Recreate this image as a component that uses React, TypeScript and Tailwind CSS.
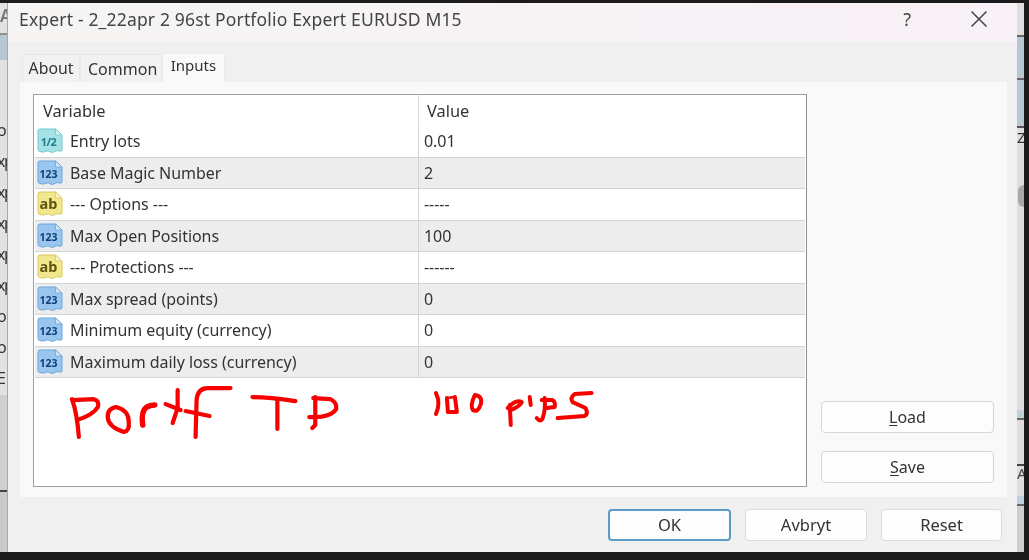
import React from "react";

type Kind = "half" | "int" | "str";

const ICONS: Record<Kind, { fill: string; stroke: string; ear: string; label: string; color: string; size: number; spacing: number }> = {
  half: { fill: "#a5e2e6", stroke: "#6cc8d0", ear: "#d8f3f4", label: "1/2", color: "#23808e", size: 11, spacing: -0.6 },
  int: { fill: "#98c6ee", stroke: "#6aa6dc", ear: "#d3e6f7", label: "123", color: "#123f78", size: 10.5, spacing: 0 },
  str: { fill: "#f1e78c", stroke: "#d9c95c", ear: "#f9f4ca", label: "ab", color: "#5f5510", size: 14.5, spacing: 0 },
};

function VarIcon({ kind }: { kind: Kind }) {
  const c = ICONS[kind];
  return (
    <svg width="28" height="26" viewBox="0 0 28 26" className="shrink-0">
      <path
        d="M4 1h15.5l6.5 6v15.5c-2 1.6-4 -.6-6 .4s-3 2-5 1.2-3-1.6-5-.8-4 1-6 .2-2-1-2-2V3a2 2 0 0 1 2-2z"
        fill={c.fill}
        stroke={c.stroke}
        strokeWidth="1"
      />
      <path d="M19.5 1v6h6.5z" fill={c.ear} stroke={c.stroke} strokeWidth="0.8" />
      <text
        x="12.5"
        y="17.5"
        textAnchor="middle"
        fontSize={c.size}
        fontWeight="700"
        letterSpacing={c.spacing}
        fill={c.color}
        fontFamily="'Noto Sans', sans-serif"
      >
        {c.label}
      </text>
    </svg>
  );
}

const ROWS: { kind: Kind; name: string; value: string }[] = [
  { kind: "half", name: "Entry lots", value: "0.01" },
  { kind: "int", name: "Base Magic Number", value: "2" },
  { kind: "str", name: "--- Options ---", value: "-----" },
  { kind: "int", name: "Max Open Positions", value: "100" },
  { kind: "str", name: "--- Protections ---", value: "------" },
  { kind: "int", name: "Max spread (points)", value: "0" },
  { kind: "int", name: "Minimum equity (currency)", value: "0" },
  { kind: "int", name: "Maximum daily loss (currency)", value: "0" },
];

const LEFT_MARKS = ["o", "xp", "xp", "xp", "xp", "xp", "o", "o", "E"];

function FootButton({ children, width, primary }: { children: React.ReactNode; width: string; primary?: boolean }) {
  return (
    <button
      className={
        "h-[32px] rounded-[4px] bg-[#fdfdfd] text-[16.5px] text-[#333] border " +
        width +
        (primary ? " border-[#5b9cc6] border-2" : " border-[#dcdcdc]")
      }
    >
      {children}
    </button>
  );
}

function SideButton({ first, rest }: { first: string; rest: string }) {
  return (
    <button className="w-[173px] h-[32px] rounded-[4px] bg-[#fdfdfd] text-[16px] text-[#333] border border-[#d6d6d6]">
      <span className="underline underline-offset-2">{first}</span>
      {rest}
    </button>
  );
}

export default function App() {
  return (
    <div
      className="w-[1029px] h-[560px] overflow-hidden bg-[#1b1b1b] pt-[3px] text-[#333] blur-[0.4px]"
      style={{ fontFamily: "'Noto Sans', 'Open Sans', sans-serif" }}
    >
      <div className="flex h-[549px]">
        {/* window behind, left edge */}
        <div className="w-[7px] shrink-0 overflow-hidden bg-[#e2e2e2] flex flex-col">
          <div className="h-[30px] shrink-0 text-[17px] font-semibold text-[#777] pt-[4px] leading-none">A</div>
          <div className="h-[27px] shrink-0 bg-[#b7c8d3] border-t-2 border-[#8a8f92]" />
          <div className="h-[62px] shrink-0" />
          {LEFT_MARKS.map((m, i) => (
            <div key={i} className="h-[31px] shrink-0 text-[16px] leading-none text-[#333] -ml-[3px] tracking-[-1.5px]">
              {m}
            </div>
          ))}
          <div className="h-[97px] shrink-0 bg-[#cfcfcf] mt-[-6px] border-b-2 border-[#444]" />
          <div className="flex-1 bg-[#c9c9c9]" />
        </div>
        <div className="w-px shrink-0 bg-[#a9a9a9]" />

        {/* dialog */}
        <div className="w-[1009px] shrink-0 bg-[#f0f0f0] flex flex-col">
          <div className="h-[39px] shrink-0 flex items-start pt-[5px] bg-linear-to-r from-[#f6f5f3] to-[#f8f1f7] pl-[11px] pr-[29px]">
            <span className="text-[17.5px] leading-[22px] text-[#444] tracking-[0.17px]">Expert - 2_22apr 2 96st Portfolio Expert EURUSD M15</span>
            <span className="ml-auto text-[18px] leading-[22px] text-[#444] mr-[59px]">?</span>
            <svg width="18" height="18" viewBox="0 0 18 18" className="text-[#444] mt-[2px]">
              <path d="M1.5 1.5l15 15M16.5 1.5l-15 15" stroke="currentColor" strokeWidth="1.5" fill="none" />
            </svg>
          </div>

          {/* tabs */}
          <div className="h-[40px] shrink-0 flex items-end pl-[14px]">
            <div className="w-[58px] h-[28px] bg-[#f2f2f2] border border-b-0 border-[#e8e8e8] flex items-center justify-center text-[15.8px]">
              About
            </div>
            <div className="w-[82px] h-[28px] bg-[#f2f2f2] border border-b-0 border-[#e8e8e8] flex items-center pl-[7px] text-[16px]">
              Common
            </div>
            <div className="w-[63px] h-[29px] bg-[#f9f9f9] border border-b-0 border-[#eaeaea] flex items-start justify-center text-[15px]">
              Inputs
            </div>
          </div>

          {/* panel */}
          <div className="h-[415px] shrink-0 ml-[12px] mr-[10px] bg-[#f9f9f9] flex pt-[12px] pb-[10px] pl-[13px]">
            <div className="w-[774px] border border-[#a0a0a0] border-r-[#8f8f8f] bg-white flex flex-col shrink-0 pl-px pr-px">
              <div className="h-[31px] shrink-0 flex items-center text-[16.4px]">
                <div className="w-[384px] h-full flex items-center pl-[8px] pt-[2px] border-r border-[#dcdcdc]">Variable</div>
                <div className="pl-[8px] pt-[2px]">Value</div>
              </div>
              {ROWS.map((r, i) => (
                <div
                  key={r.name}
                  className={
                    "h-[31.5px] shrink-0 flex items-center text-[16px] tracking-[-0.04px] border-b border-[#d4d4d4] " +
                    (i % 2 === 1 ? "bg-[#ededed]" : "bg-white")
                  }
                >
                  <div className="w-[384px] h-full flex items-center gap-[6px] pl-[1px] border-r border-[#d4d4d4]">
                    <VarIcon kind={r.kind} />
                    <span>{r.name}</span>
                  </div>
                  <div className="pl-[5px]">{r.value}</div>
                </div>
              ))}
              <div className="flex-1 min-h-0">
                <svg
                  viewBox="34 378 772 108"
                  className="block w-full h-full"
                  fill="none"
                  stroke="#f60000"
                  strokeLinecap="round"
                  strokeLinejoin="round"
                  role="img"
                >
                  <title>Portf TP 100 pips</title>
                  <g strokeWidth="4.2">
                    <path d="M71 399Q76 412 78 437" />
                    <path d="M72 400L92 399Q99 400 97 407Q92 415 76 420" />
                    <path d="M115 407Q106 409 107 418Q108 427 123 432Q129 431 128 422Q128 410 115 407Z" />
                    <path d="M142 425Q140 411 146 407Q150 405 154 405" strokeWidth="5.5" />
                    <path d="M177 390L177 408L172 423" />
                    <path d="M165 404L180 410" />
                    <path d="M230 388H207Q197 388 196 400L195 437" />
                    <path d="M185 411L209 416" />
                    <path d="M252 397Q270 397 295 401" />
                    <path d="M277 399V429" />
                    <path d="M315 397V425L312 428" />
                    <path d="M313 398L330 399Q337 402 336 409Q330 418 309 417" />
                  </g>
                  <g strokeWidth="4">
                    <path d="M436 393Q441 403 436 414" />
                    <path d="M447 398L448 412L457 412L455 397" />
                    <path d="M447 398L455 397" strokeWidth="2.5" />
                    <path d="M475 395Q470 405 473 410Q478 413 481 404Q483 396 475 395Z" />
                    <path d="M511 425L510 405" />
                    <path d="M508 408Q516 399 522 402Q521 406 511 410" />
                    <path d="M530 397L531 405" />
                    <path d="M537 418Q541 423 543 418Q546 410 545 398" />
                    <path d="M542 400H553Q556 402 555 407L547 408" />
                    <path d="M592 393L575 394Q570 398 573 402L586 408Q589 414 585 416L558 418" />
                  </g>
                </svg>
              </div>
            </div>
            <div className="ml-[14px] flex flex-col justify-end gap-[18px] pb-[4px]">
              <SideButton first="L" rest="oad" />
              <SideButton first="S" rest="ave" />
            </div>
          </div>

          {/* footer */}
          <div className="flex-1 flex justify-end gap-[14px] pt-[12px] pr-[15px]">
            <FootButton primary width="w-[123px]">OK</FootButton>
            <FootButton width="w-[122px]">Avbryt</FootButton>
            <FootButton width="w-[121px]">Reset</FootButton>
          </div>
        </div>

        {/* window behind, right edge */}
        <div className="w-[7px] shrink-0 bg-[#dedede] flex flex-col overflow-hidden">
          <div className="h-[32px] shrink-0" />
          <div className="h-[43px] shrink-0 bg-[#b7c8d3] border-t-2 border-[#666]" />
          <div className="h-[48px] shrink-0 bg-[#b7c8d3] border-t-2 border-[#666]" />
          <div className="h-[4px] shrink-0 border-t-2 border-[#555]" />
          <div className="h-[55px] shrink-0 text-[15px] leading-none text-[#333]">Z</div>
          <div className="h-[22px] shrink-0 bg-[#a8a8a8] rounded-l-[6px] ml-[1px]" />
          <div className="h-[203px] shrink-0" />
          <div className="h-[10px] shrink-0 bg-[#c0d0da] border-b-2 border-[#666]" />
          <div className="h-[44px] shrink-0" />
          <div className="h-[22px] shrink-0 border-t-2 border-[#444] text-[15px] leading-none text-[#444]">A</div>
          <div className="h-[10px] shrink-0 mt-[10px] bg-[#c0d0da] border-b-2 border-[#666]" />
          <div className="flex-1 bg-[#cfcfcf]" />
        </div>
      </div>
    </div>
  );
}
